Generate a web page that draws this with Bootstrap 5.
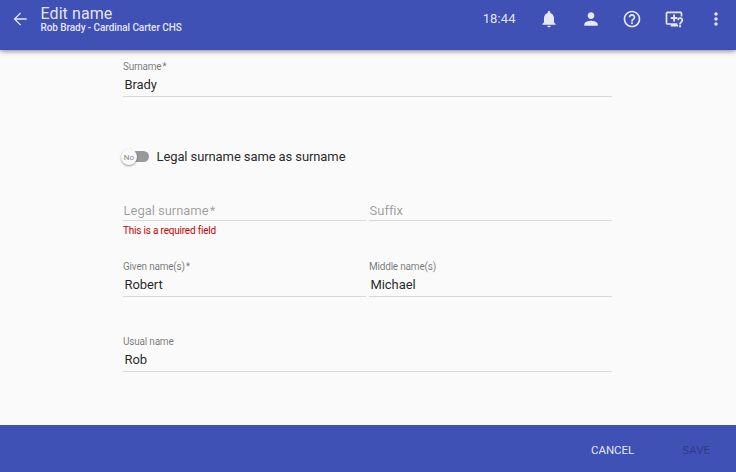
<!DOCTYPE html>
<html lang="en">
<head>
<meta charset="utf-8">
<meta name="viewport" content="width=device-width, initial-scale=1">
<title>Edit name</title>
<link href="https://cdn.jsdelivr.net/npm/bootstrap@5.3.0/dist/css/bootstrap.min.css" rel="stylesheet">
<style>
body{font-family:Roboto,"Liberation Sans",sans-serif;background:#fafafa;height:472px;color:rgba(0,0,0,.87);font-size:13px}
.app-bar{background:#3f51b5;color:rgba(255,255,255,.87);height:50px;box-shadow:0 1px 5px rgba(0,0,0,.5);padding-left:9.5px;padding-right:0;z-index:2}
.app-bar svg{width:20px;height:20px;fill:currentColor;display:block}
.tool-btn{width:41.65px;height:37px;color:inherit;background:none}
.back-btn{height:37px;color:inherit;background:none}
.title-block{margin-left:11px;padding-top:5px}
.title-block h1{font-size:16px;line-height:17px;font-weight:400;margin:0;letter-spacing:.08px}
.title-block p{font-size:10px;line-height:12px;font-weight:500;margin:0;letter-spacing:-.08px}
.clock{font-size:13px;line-height:37px;letter-spacing:.1px;margin-right:12.6px}
.tools{margin-right:-.4px}
.form-area{width:489px;margin-left:123px;padding-top:10px}
.pair{display:grid;grid-template-columns:243px 243px;column-gap:3px}
.field{height:37px;border-bottom:1px solid #d9d9d9}
.field label{display:block;font-size:10px;letter-spacing:-.2px;line-height:13px;color:rgba(0,0,0,.54);white-space:pre}
.field .val{font-size:13px;letter-spacing:-.08px;line-height:23px;padding-left:1.5px}
.field .hint{font-size:13px;line-height:16px;padding:19px 0 0 .6px;letter-spacing:-.04px;color:rgba(0,0,0,.38)}
.error-text{font-size:10px;letter-spacing:-.2px;line-height:13px;color:#c80000;height:39px;padding-top:3px}
.toggle-row{height:87px;padding-top:33px}
.track{width:26px;height:11px;border-radius:6px;background:#999;margin-right:7.5px;top:-.5px}
.thumb{width:16px;height:16px;left:-2px;top:-2px;border-radius:50%;background:#fafafa;box-shadow:0 1px 2px rgba(0,0,0,.4);font-size:8px;line-height:17px;color:#888}
.toggle-text{font-size:13px;letter-spacing:-.1px;line-height:20px}
.action-bar{background:#3f51b5;height:47px;font-size:11.5px;font-weight:500;padding-right:26px;gap:48px;padding-top:3px}
.action-bar button{background:none;color:rgba(255,255,255,.87);line-height:20px}
.action-bar button:disabled{color:rgba(0,0,0,.3)}
</style>
</head>
<body class="d-flex flex-column overflow-hidden">
<header class="app-bar d-flex align-items-start position-relative flex-shrink-0">
  <button class="back-btn border-0 p-0 d-flex align-items-center" aria-label="Back"><svg viewBox="0 0 24 24"><path d="M20 11.200H7.400l6-6L12.300 4.100l-8 7.900 8 7.900 1.100-1.100-6-6H20z"/></svg></button>
  <div class="title-block"><h1>Edit name</h1><p>Rob Brady - Cardinal Carter CHS</p></div>
  <div class="tools d-flex ms-auto">
    <span class="clock">18:44</span>
    <button class="tool-btn border-0 p-0 d-flex align-items-center justify-content-center" aria-label="Notifications"><svg viewBox="0 0 24 24"><path d="M12 22c1.1 0 2-.9 2-2h-4c0 1.1.89 2 2 2zm6-6v-5c0-3.07-1.64-5.64-4.5-6.32V4c0-.83-.67-1.5-1.5-1.5s-1.5.67-1.5 1.5v.68C7.63 5.36 6 7.92 6 11v5l-2 2v1h16v-1l-2-2z"/></svg></button>
    <button class="tool-btn border-0 p-0 d-flex align-items-center justify-content-center" aria-label="Account"><svg viewBox="0 0 24 24"><path d="M12 12c2.21 0 4-1.79 4-4s-1.79-4-4-4-4 1.79-4 4 1.79 4 4 4zm0 2c-2.67 0-8 1.34-8 4v2h16v-2c0-2.66-5.33-4-8-4z"/></svg></button>
    <button class="tool-btn border-0 p-0 d-flex align-items-center justify-content-center" aria-label="Help"><svg viewBox="0 0 24 24"><path d="M11 18h2v-2h-2v2zm1-16C6.48 2 2 6.48 2 12s4.48 10 10 10 10-4.48 10-10S17.520 2 12 2zm0 18c-4.410 0-8-3.590-8-8s3.590-8 8-8 8 3.590 8 8-3.590 8-8 8zm0-14c-2.210 0-4 1.790-4 4h2c0-1.100.900-2 2-2s2 .900 2 2c0 2-3 1.750-3 5h2c0-2.250 3-2.500 3-5 0-2.210-1.790-4-4-4z"/></svg></button>
    <button class="tool-btn border-0 p-0 d-flex align-items-center justify-content-center" aria-label="Remote support"><svg viewBox="0 0 24 24"><path d="M4 3h16a2 2 0 0 1 2 2v4h-2V5H4v12h12v2h1v2H8v-2H4a2 2 0 0 1-2-2V5a2 2 0 0 1 2-2z"/><path d="M11 6.500h2.200v3.200H16v2.200h-2.800V15H11v-3.100H8V9.700h3z"/><path d="M15.800 13.500c0-2.200 1.600-3.500 3.600-3.500s3.600 1.300 3.600 3.400c0 2.600-2.600 2.700-2.600 5.100h-2.200c0-3.200 2.600-3.500 2.600-5.100 0-.900-.600-1.400-1.400-1.400s-1.400.600-1.400 1.500zM18.200 19.600h2.300V22h-2.300z"/></svg></button>
    <button class="tool-btn border-0 p-0 d-flex align-items-center justify-content-center" aria-label="More"><svg viewBox="0 0 24 24"><path d="M12 8c1.100 0 2-.900 2-2s-.900-2-2-2-2 .900-2 2 .900 2 2 2zm0 2c-1.100 0-2 .900-2 2s.900 2 2 2 2-.900 2-2-.900-2-2-2zm0 6c-1.100 0-2 .900-2 2s.900 2 2 2 2-.900 2-2-.900-2-2-2z"/></svg></button>
  </div>
</header>
<main class="form-area flex-grow-1">
  <div class="field"><label>Surname&#8202;*</label><div class="val">Brady</div></div>
  <div class="toggle-row d-flex align-items-center">
    <div class="track position-relative"><span class="thumb position-absolute text-center">No</span></div>
    <span class="toggle-text">Legal surname same as surname</span>
  </div>
  <div class="pair">
    <div class="field"><div class="hint">Legal surname&#8202;*</div></div>
    <div class="field"><div class="hint">Suffix</div></div>
  </div>
  <div class="error-text">This is a required field</div>
  <div class="pair">
    <div class="field"><label>Given name(s)&#8202;*</label><div class="val">Robert</div></div>
    <div class="field"><label>Middle name(s)</label><div class="val">Michael</div></div>
  </div>
  <div class="field" style="margin-top:38px"><label>Usual name</label><div class="val">Rob</div></div>
</main>
<footer class="action-bar d-flex justify-content-end align-items-center flex-shrink-0">
  <button class="border-0 p-0">CANCEL</button>
  <button class="border-0 p-0" disabled>SAVE</button>
</footer>
<script src="https://cdn.jsdelivr.net/npm/bootstrap@5.3.0/dist/js/bootstrap.bundle.min.js"></script>
</body>
</html>
